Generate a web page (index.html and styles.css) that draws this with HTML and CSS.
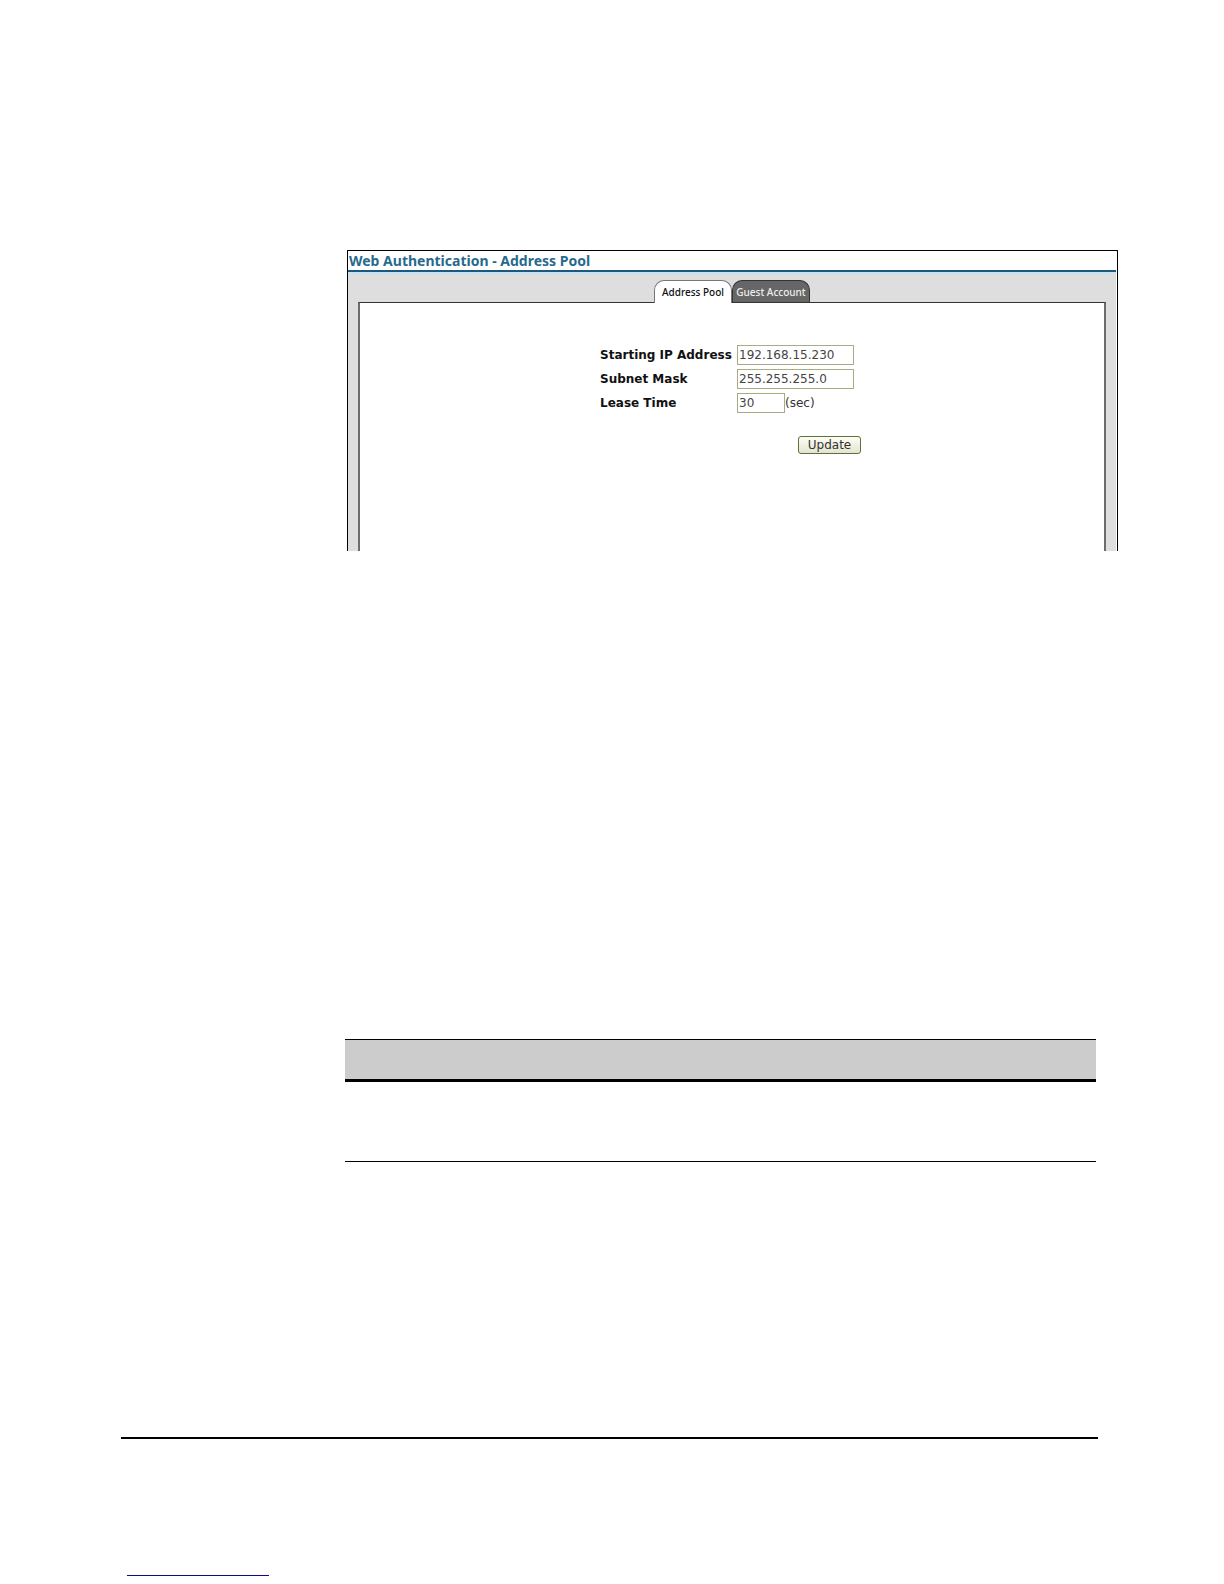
FILE: index.html
```html
<!DOCTYPE html>
<html lang="en">
<head>
    <meta charset="UTF-8">
    <meta name="viewport" content="width=device-width, initial-scale=1.0">
    <title>Web Authentication - Address Pool</title>
    <link rel="stylesheet" href="styles.css">
</head>
<body>

<main class="content">
    <section class="window">
        <h1>Web Authentication - Address Pool</h1>
        <div class="workspace">
            <nav class="tabs">
                <a href="#pool" class="tab active">Address Pool</a>
                <a href="#guest" class="tab">Guest Account</a>
            </nav>
            <div class="panel" id="pool">
                <form class="pool-form">
                    <label for="startIp">Starting IP Address</label>
                    <div class="field"><input type="text" id="startIp" value="192.168.15.230"></div>
                    <label for="mask">Subnet Mask</label>
                    <div class="field"><input type="text" id="mask" value="255.255.255.0"></div>
                    <label for="lease">Lease Time</label>
                    <div class="field"><input type="text" id="lease" class="short" value="30"><span>(sec)</span></div>
                    <button type="button" class="btn">Update</button>
                </form>
            </div>
        </div>
    </section>

    <table class="commands">
        <thead>
            <tr><th></th></tr>
        </thead>
        <tbody>
            <tr><td></td></tr>
        </tbody>
    </table>
</main>

<footer class="footer">
    <a href="#pool" class="footer-link" aria-label="Back to top"></a>
</footer>

</body>
</html>
```

FILE: styles.css
```css
* {
    box-sizing: border-box;
}
body {
    font-family: "DejaVu Sans", Verdana, sans-serif;
    font-size: 12px;
    background-color: #fff;
    color: #333;
    margin: 0;
    padding: 250px 106px 0 121px;
}
.content {
    padding-left: 224px;
}
.window {
    margin-left: 2px;
    border: 1px solid #000;
    border-bottom: none;
}
h1 {
    margin: 0 1px 0 0;
    padding-left: 1px;
    font-family: "Noto Sans", Tahoma, sans-serif;
    font-size: 14px;
    line-height: 19px;
    color: #286a8e;
    border-bottom: 2px solid #20587c;
}
.workspace {
    margin-right: 1px;
    padding: 6px 10px 0;
    background-color: #dedede;
    border-top: 2px solid #c6e2f5;
}
.tabs {
    display: flex;
    justify-content: center;
}
.tab {
    width: 78px;
    height: 22px;
    font-family: "Noto Sans", Tahoma, sans-serif;
    font-size: 10px;
    font-weight: 500;
    line-height: 22px;
    text-align: center;
    text-decoration: none;
    white-space: nowrap;
    color: #eee;
    background-color: #666;
    border: 1px solid #333;
    border-bottom: none;
    border-radius: 10px 10px 0 0;
}
.tab.active {
    height: 23px;
    margin-bottom: -1px;
    color: #111;
    background-color: #fff;
    border-color: #777;
    position: relative;
}
.panel {
    height: 249px;
    padding-top: 42px;
    background-color: #fff;
    border: 2px solid #6c6c6c;
    border-top: 1px solid #333;
    border-bottom: none;
}
.pool-form {
    display: grid;
    grid-template-columns: 137px 124px;
    row-gap: 4px;
    justify-content: center;
    align-items: center;
    padding-right: 3px;
}
.pool-form label {
    font-weight: bold;
    color: #111;
    white-space: nowrap;
}
.field {
    display: flex;
    align-items: center;
}
.field input {
    width: 117px;
    height: 20px;
    padding: 0 1px;
    font-family: inherit;
    font-size: 12px;
    color: #444;
    background-color: #fff;
    border: 1px solid #a9ab86;
}
.field input.short {
    width: 48px;
}
.btn {
    grid-column: 2;
    justify-self: end;
    width: 63px;
    height: 18px;
    margin-top: 19px;
    padding: 0;
    font-family: inherit;
    font-size: 12px;
    line-height: 16px;
    color: #333;
    background: linear-gradient(#fdfdf6, #e4e5cf);
    border: 1px solid #5d6f3d;
    border-radius: 3px;
}
.commands {
    width: calc(100% - 22px);
    margin-top: 488px;
    border-collapse: separate;
    border-spacing: 0;
}
.commands th {
    height: 43px;
    padding: 0;
    background-color: #ccc;
    border-top: 1px solid #000;
    border-bottom: 3px solid #000;
}
.commands td {
    height: 80px;
    padding: 0;
    border-bottom: 1px solid #000;
}
.footer {
    margin: 275px 20px 0 0;
    padding: 0 6px;
    border-top: 2px solid #000;
}
.footer-link {
    display: block;
    width: 142px;
    height: 137px;
    border-bottom: 1px solid #0c0c80;
}
```
